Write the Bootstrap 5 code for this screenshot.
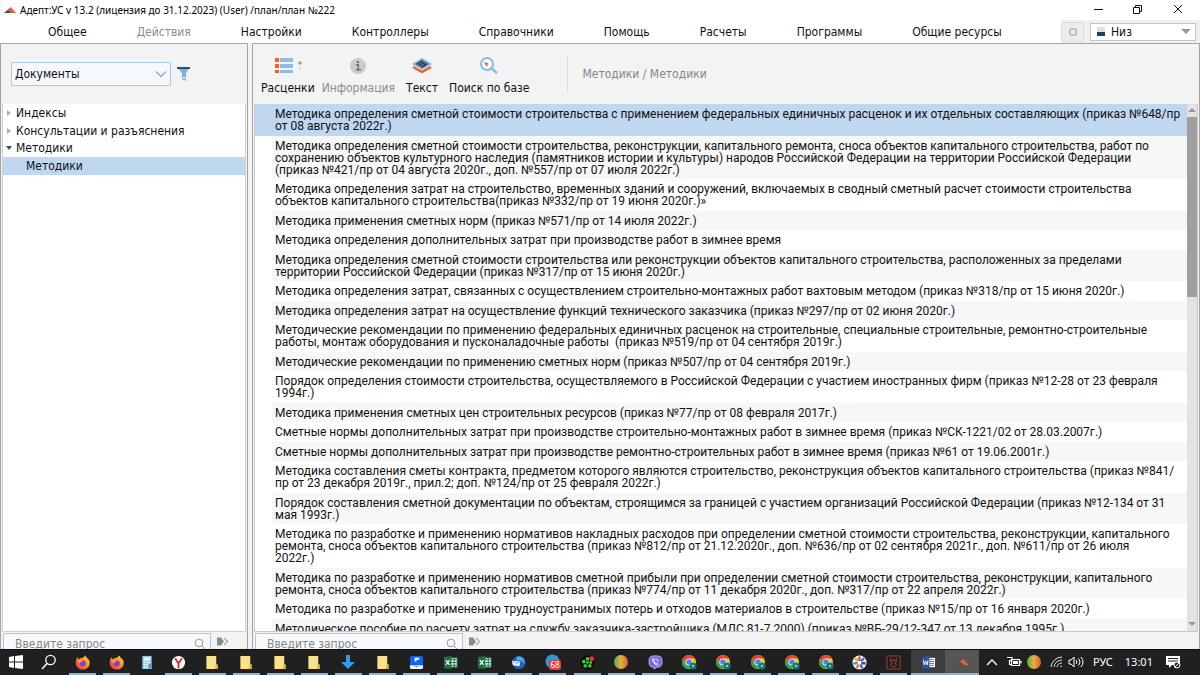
<!DOCTYPE html>
<html lang="ru">
<head>
<meta charset="utf-8">
<meta name="viewport" content="width=device-width, initial-scale=1">
<title>Адепт:УС</title>
<link href="https://cdn.jsdelivr.net/npm/bootstrap@5.3.0/dist/css/bootstrap.min.css" rel="stylesheet">
<style>
body{font:12px/14px "DejaVu Sans Condensed","DejaVu Sans",Verdana,sans-serif;color:#111;background:#f3f3f3}
button{font:inherit;color:inherit;border:0;background:none;padding:0}
svg{display:block;flex:none}
.title-bar{height:20px;font-family:"Noto Sans","Segoe UI",sans-serif;font-size:10px;color:#000}
.win-btns{gap:24px;padding-right:16px}
.menu-bar{height:23px}
.menu-bar ul{padding-left:23px}
.menu-bar a{color:#111;text-decoration:none;padding:0 25px;line-height:24px}
.menu-bar a.off,.tool.off{color:#8c8c8c}
.dock-box{background:#f0f0f0;gap:6px}
.dock-btn{width:23px;height:20px;background:#efedec;border:1px solid #dcdcdc}
.dock-select{width:106px;height:18px;border:1px solid #c6c6c6;background:#fff}
.dock-select select{appearance:none;border:0;background:none;font:inherit;padding:0;color:#111}
.pane{border:1px solid #a3a3a3;border-bottom:0;background:#f3f3f3}
.side{width:248px}
.gutter{width:4px}
.pane-head{height:60px}
.side .pane-head{padding-left:10px}
.doc-select{width:160px;height:24px;min-height:0;border:1px solid #a9c9e9;border-radius:1px;background-color:#f5f9fe;padding:0 20px 0 3px;font-size:12px;line-height:22px;color:#111;background-position:right 3px center;background-size:12px 8px;background-image:url("data:image/svg+xml,%3Csvg xmlns='http://www.w3.org/2000/svg' viewBox='0 0 12 8'%3E%3Cpath d='M1 1.5l5 5 5-5' fill='none' stroke='%2382afd8' stroke-width='1.3'/%3E%3C/svg%3E")}
.tree-box{margin:0 1px;border:1px solid #d0d0d0;border-top:0;background:#fff}
.tree-row{display:flex;align-items:center;width:100%;text-align:left;height:18px;padding-left:3px;gap:4px}
.tree-row:nth-child(2){height:17px}
.tree-row.child{padding-left:23px}
.picked{background:#bfd7ef!important}
.tool{display:flex;flex-direction:column;align-items:center;justify-content:space-between;height:40px;text-align:center}
.tools{gap:7px;padding:11px 0 0 8px}
.crumbs{border-left:1px solid #dedede;height:38px;margin-left:38px;padding-left:14px;color:#858585}
.doc-box{margin:0 1px;border:1px solid #c9c9c9;border-top:0;background:#fff}
.doc-list{font-family:Roboto,Verdana,sans-serif}
.doc-list button{display:block;width:100%;text-align:left;line-height:12px;white-space:pre;padding:4px 0 4px 3px}
.doc-list li{padding-left:17px;overflow:hidden}
.doc-list li:nth-child(even) button{background:#f7f7f7;padding-bottom:3px}
.scroller{width:10px;background:#e3e3e3}
.thumb{height:180px;background:#9f9f9f}
.search-foot{height:17px;overflow:hidden;padding:1px 0 0 2px;gap:6px}
.find-box{width:208px;height:21px;border:1px solid #a9c9e9;background:#f5f9fe}
.find-box input{border:0;background:none;min-width:0;width:180px;font:inherit;padding:0 0 0 11px;height:20px;outline:0}
.find-box input::placeholder{color:#858585;opacity:1}
.task-bar{height:26px;background:#202020;color:#fff;border-top:1px solid #0d0d0d;font-family:"Noto Sans","Segoe UI",sans-serif;font-size:11px}
.start-group{width:65px}
.pin-group{width:130px}
.tb{display:flex;justify-content:center;align-items:center;flex:1 1 0;height:25px;padding-bottom:1px;min-width:0}
.run{background:linear-gradient(#76b9ed,#76b9ed) center bottom/27px 2px no-repeat}
.tb.front{background-color:#3d3d3d;background-size:100% 2px}
.tb.now{background-color:#555;background-size:100% 2px}
.pin-group .slim{flex:0 0 28px}
.tray{width:221px;padding:0 0 2px 7px}
</style>
</head>
<body class="vh-100 overflow-hidden d-flex flex-column">
<svg width="0" height="0" class="position-absolute" aria-hidden="true">
<defs>
<linearGradient id="gMulti"><stop offset="0" stop-color="#4fb052"/><stop offset=".5" stop-color="#e8b23a"/><stop offset="1" stop-color="#e5542f"/></linearGradient>
<linearGradient id="gFox" x1="1" y1="0" x2="0" y2="1"><stop offset="0" stop-color="#ffe03b"/><stop offset=".5" stop-color="#ff8526"/><stop offset="1" stop-color="#f0245f"/></linearGradient>
<symbol id="adept" viewBox="0 0 14 8"><path d="M0 7L6 2l3 5z" fill="#2d5270"/><path d="M4 3l4-3 6 7H9z" fill="#e8602c"/></symbol>
<symbol id="fox" viewBox="0 0 16 16"><path d="M8.500 3L11 .5 12.500 3c3 2 3.500 4 3 7-.8 3.500-4 5.500-7.500 5.500C4 15.500.8 12.500.8 8.500.8 6 1.500 4 2.500 2.500L4 4.500c1.500-1 3-1.500 4.500-1.500z" fill="url(#gFox)"/><circle cx="8.300" cy="9" r="3.200" fill="#7b3fe0"/><path d="M3 6c2-1 4-.5 5.500 1-2 0-2.500 1.500-4 1.500z" fill="#ffa436"/></symbol>
<symbol id="calc" viewBox="0 0 12 16"><path d="M1 1h10v14H1z" fill="#8cc6ec"/><path d="M2.500 2.500h7V6h-7z" fill="#eef8ff"/><path d="M2.500 8h7M2.500 10.500h5M2.500 13h5" stroke="#fff" stroke-width="1.600" stroke-dasharray="1.600 .8"/><path d="M8 9.500h2v4.500H8z" fill="#3f91cd"/></symbol>
<symbol id="yan" viewBox="0 0 16 16"><circle cx="8" cy="8" r="7" fill="#fff"/><path d="M4.300 3.500L8 9v5M11.700 3.500L8 9" fill="none" stroke="#e2252b" stroke-width="2"/></symbol>
<symbol id="fold" viewBox="0 0 14 16"><path d="M1 1h10.500v9H13v5H1z" fill="#fbe28a"/><path d="M11 10h2v5h-3z" fill="#d9af45"/></symbol>
<symbol id="down" viewBox="0 0 14 16"><path d="M5 1h4v7h5l-7 7-7-7h5z" fill="#3498e8"/></symbol>
<symbol id="blue" viewBox="0 0 16 16"><path d="M1 3q0-2 2-2h10q2 0 2 2v8H1z" fill="#0867f8"/><path d="M1 11h14v2q0 2-2 2H3q-2 0-2-2z" fill="#f7f9ff"/><path d="M6 9V3h5v2H8v2H6" fill="#fff"/><path d="M7 12l1 1 1-1" stroke="#333" fill="none"/></symbol>
<symbol id="excel" viewBox="0 0 16 16"><path d="M8 3h7v10H8z" fill="#e9f4ed" stroke="#217346"/><path d="M9 5h5M9 8h5M9 11h5M12 3v10" stroke="#217346"/><path d="M1 2l8-1v14l-8-1z" fill="#1c7042"/><path d="M3 5.500l4 5M7 5.500l-4 5" stroke="#fff" stroke-width="1.300"/></symbol>
<symbol id="bird" viewBox="0 0 16 16"><circle cx="8.500" cy="8" r="7" fill="#1e63b8"/><path d="M6 2c5-2 10 3 8 8-1-4-4-5-8-4z" fill="#4eadf0"/><path d="M1 6l9 1-1 5-7-1z" fill="#f0f3f7"/><path d="M2 6.500L6 9l4-2" stroke="#8296ad" fill="none"/></symbol>
<symbol id="tele" viewBox="0 0 16 16"><circle cx="7.500" cy="7.500" r="7" fill="#2a9bd7"/><rect x="4" y="6" width="12" height="10" rx="2" fill="#e33b3b"/></symbol>
<symbol id="icq" viewBox="0 0 16 16"><circle cx="8" cy="8" r="7.500" fill="#050805"/><g fill="#2ed22e"><circle cx="8" cy="4" r="2"/><circle cx="4" cy="7" r="2"/><circle cx="5.500" cy="11.500" r="2"/><circle cx="10.500" cy="11.500" r="2"/><circle cx="11.500" cy="8" r="1.500"/><circle cx="8" cy="8" r="1.500"/></g><circle cx="12.500" cy="4" r="2.600" fill="#f32d2d"/></symbol>
<symbol id="ball" viewBox="0 0 16 16"><circle cx="8" cy="8" r="7" fill="url(#gMulti)"/></symbol>
<symbol id="viber" viewBox="0 0 16 16"><path d="M3 1.500Q8 0 13 1.500q2 1 2 5.500t-2 5.500l-4 .8L6.500 15v-2L3 12.500Q1 11 1 7t2-5.500z" fill="#7567ed" stroke="#d7d2fb" stroke-width=".8"/><path d="M5 4q-1 1 1 4t4 3l1-1-2-1.500-1 .5-1.500-2L7 5.500 6 4zM8 4q3 0 3 3" fill="none" stroke="#fff"/></symbol>
<symbol id="chrome" viewBox="0 0 16 16"><circle cx="8" cy="8" r="7" fill="#fbc116"/><path d="M1.900 4.500A7 7 0 0 1 14 4.500H8L5 9.500z" fill="#e94235"/><path d="M1.900 4.500A7 7 0 0 0 7.500 15l3-5.200-5.500 0z" fill="#32a350"/><circle cx="8" cy="8" r="3.600" fill="#fff"/><circle cx="8" cy="8" r="2.800" fill="#4285f4"/><circle cx="12" cy="12" r="3.600" fill="#087d72"/><circle cx="12" cy="12" r="1" fill="#c6e5df"/></symbol>
<symbol id="wheel" viewBox="0 0 16 16"><circle cx="8" cy="8" r="7.500" fill="#fff"/><g stroke-width="2.600"><path d="M8 6.500V1.500" stroke="#e84b42"/><path d="M9.500 6.500l3.500-3" stroke="#2a77c9"/><path d="M10 8.500l4.500 .5" stroke="#2d4d9c"/><path d="M9 10l2 4" stroke="#7651a8"/><path d="M7 10l-2 4" stroke="#ed7b32"/><path d="M6 8.500L1.500 9" stroke="#27a8a2"/><path d="M6.500 6.500L3 3.500" stroke="#f1a632"/></g></symbol>
<symbol id="beast" viewBox="0 0 16 16"><path d="M1 1h14v14H1z" fill="#241c1c" stroke="#8c4640"/><path d="M5 3v3h6V3M4 6l2 2-1 3 3 2 3-2-1-3 2-2M6.500 8.500v1M9.500 8.500v1M8 4v2" fill="none" stroke="#ad5147" stroke-width=".8"/></symbol>
<symbol id="word" viewBox="0 0 16 16"><path d="M8 3h7v10H8z" fill="#fff"/><path d="M9 5h5M9 7h5M9 9h5M9 11h5" stroke="#2b579a" stroke-width=".8"/><path d="M1 2l8-1v14l-8-1z" fill="#2b579a"/><path d="M2.500 5.500l1 5 1.500-4 1.500 4 1-5" stroke="#fff" fill="none"/></symbol>
<symbol id="lens" viewBox="0 0 16 16"><circle cx="9.500" cy="6" r="4.700" fill="none" stroke="currentColor" stroke-width="1.300"/><path d="M6 9.500L1 15" stroke="currentColor" stroke-width="1.500"/></symbol>
<symbol id="find" viewBox="0 0 12 12"><circle cx="5" cy="5" r="3.800" fill="none" stroke="#999"/><path d="M8 8l3 3" stroke="#999"/></symbol>
<symbol id="go" viewBox="0 0 12 8"><path d="M0 0h4l3 4-3 4H0z" fill="#8a8a8a"/><path d="M7 .5L10.500 4 7 7.500" fill="none" stroke="#aaa" stroke-width="1.300"/></symbol>
</defs>
</svg>

<header class="bg-white">
<div class="title-bar d-flex align-items-center">
<svg class="ms-1 me-1" width="12" height="7"><use href="#adept"/></svg><span>Адепт:УС v 13.2 (лицензия до 31.12.2023) (User) /план/план №222</span>
<div class="win-btns d-flex ms-auto">
<button aria-label="Свернуть"><svg width="16" height="12"><path d="M2 5.500h9" stroke="#111"/></svg></button>
<button aria-label="Восстановить"><svg width="16" height="12"><path d="M1.500 3.500h6v6h-6zM3.500 3V1.500h6v6H8" fill="none" stroke="#111"/></svg></button>
<button aria-label="Закрыть"><svg width="12" height="12"><path d="M2 1l8 8M10 1l-8 8" stroke="#111"/></svg></button>
</div>
</div>
<nav class="menu-bar d-flex">
<ul class="list-unstyled d-flex mb-0 text-nowrap">
<li><a href="#">Общее</a></li><li><a href="#" class="off">Действия</a></li><li><a href="#">Настройки</a></li><li><a href="#">Контроллеры</a></li><li><a href="#">Справочники</a></li><li><a href="#">Помощь</a></li><li><a href="#">Расчеты</a></li><li><a href="#">Программы</a></li><li><a href="#">Общие ресурсы</a></li>
</ul>
<div class="dock-box d-flex align-items-center ms-auto pe-1">
<button class="dock-btn d-flex align-items-center justify-content-center" aria-label="Панель"><svg width="8" height="8"><path d="M1 1h6v6H1z" fill="none" stroke="#999"/></svg></button>
<label class="dock-select d-flex align-items-center px-1"><svg width="12" height="12"><path d="M2 1h8v5H2z" fill="#d6e3ef"/><path d="M2 6h8v4H2z" fill="#233f5e"/></svg>
<select class="flex-fill ms-1" aria-label="Положение"><option>Низ</option></select><svg width="10" height="6"><path d="M0 0h10L5 5z" fill="#999"/></svg></label>
</div>
</nav>
</header>

<main class="d-flex flex-fill overflow-hidden">
<aside class="pane side d-flex flex-column flex-shrink-0">
<div class="pane-head d-flex align-items-center"><select class="form-select doc-select" aria-label="Раздел"><option>Документы</option></select>
<button class="ms-1" aria-label="Фильтр"><svg width="18" height="16"><path d="M2 1h13l-4 6v3H7V7z" fill="#7fb0dd"/><path d="M2 1h13v2H2z" fill="#29506f"/><path d="M7.500 10.500h3v3h-3zM10.500 12v3" fill="#e5f1fb" stroke="#7fb0dd"/></svg></button></div>
<div class="tree-box flex-fill">
<button class="tree-row"><svg width="6" height="6"><path d="M1 0l4 3-4 3z" fill="#aaa"/></svg>Индексы</button>
<button class="tree-row"><svg width="6" height="6"><path d="M1 0l4 3-4 3z" fill="#aaa"/></svg>Консультации и разъяснения</button>
<button class="tree-row"><svg width="6" height="6"><path d="M0 1h6L3 5z" fill="#29506f"/></svg>Методики</button>
<button class="tree-row child picked">Методики</button>
</div>
<form class="search-foot d-flex"><div class="find-box d-flex"><input type="text" placeholder="Введите запрос" aria-label="Введите запрос"><svg class="ms-auto me-1 mt-1" width="12" height="12"><use href="#find"/></svg></div><button type="button" aria-label="Найти" class="align-self-start mt-1"><svg width="12" height="9"><use href="#go"/></svg></button></form>
</aside>
<div class="gutter flex-shrink-0"></div>
<section class="pane d-flex flex-column flex-fill overflow-hidden">
<div class="pane-head d-flex flex-shrink-0 text-nowrap">
<div class="tools d-flex">
<button class="tool"><svg width="30" height="20"><path d="M2 3h4v4H2zM2 9h4v4H2zM2 15h4v3H2z" fill="#f95d17"/><path d="M7 3h13v4H7zM7 9h13v4H7zM7 15h13v3H7z" fill="#90bce2"/><circle cx="27" cy="8" r="1.700" fill="#69c65a"/><circle cx="27" cy="13" r="1.500" fill="#ddd"/></svg>Расценки</button>
<button class="tool off"><svg width="18" height="20"><circle cx="9" cy="11" r="8" fill="#cbcbcb"/><path d="M8 6h2v2H8zM7 9h3v5h2v1.500H7V14h1.500v-3.500H7z" fill="#6e6e6e"/></svg>Информация</button>
<button class="tool mx-1"><svg width="20" height="20"><path d="M1 12l9 5 9-5" fill="none" stroke="#f45b1c" stroke-width="2.400"/><path d="M0 9l10-6 10 6-10 6z" fill="#86b6df"/><path d="M3.500 9L10 5l6.500 4-6.500 4z" fill="#203f5c"/><path d="M7 7.500l5 3M9.500 6l5 3M5 9l5 3" stroke="#86a4be" stroke-width=".7"/></svg>Текст</button>
<button class="tool"><svg width="20" height="20"><circle cx="8" cy="9" r="6" fill="#f7fbff" stroke="#8abbe5" stroke-width="2"/><path d="M12 13l6 5" stroke="#8abbe5" stroke-width="2.400"/><path d="M5 7l4 1-1 4z" fill="#f45b1c"/></svg>Поиск по базе</button>
</div>
<div class="crumbs d-flex align-items-center align-self-center">Методики / Методики</div>
</div>
<div class="doc-box d-flex flex-fill overflow-hidden">
<ul class="doc-list list-unstyled mb-0 flex-fill overflow-hidden">
<li class="picked"><button>Методика определения сметной стоимости строительства с применением федеральных единичных расценок и их отдельных составляющих (приказ №648/пр<br>от 08 августа 2022г.)</button></li>
<li><button>Методика определения сметной стоимости строительства, реконструкции, капитального ремонта, сноса объектов капитального строительства, работ по<br>сохранению объектов культурного наследия (памятников истории и культуры) народов Российской Федерации на территории Российской Федерации<br>(приказ №421/пр от 04 августа 2020г., доп. №557/пр от 07 июля 2022г.)</button></li>
<li><button>Методика определения затрат на строительство, временных зданий и сооружений, включаемых в сводный сметный расчет стоимости строительства<br>объектов капитального строительства(приказ №332/пр от 19 июня 2020г.)»</button></li>
<li><button>Методика применения сметных норм (приказ №571/пр от 14 июля 2022г.)</button></li>
<li><button>Методика определения дополнительных затрат при производстве работ в зимнее время</button></li>
<li><button>Методика определения сметной стоимости строительства или реконструкции объектов капитального строительства, расположенных за пределами<br>территории Российской Федерации (приказ №317/пр от 15 июня 2020г.)</button></li>
<li><button>Методика определения затрат, связанных с осуществлением строительно-монтажных работ вахтовым методом (приказ №318/пр от 15 июня 2020г.)</button></li>
<li><button>Методика определения затрат на осуществление функций технического заказчика (приказ №297/пр от 02 июня 2020г.)</button></li>
<li><button>Методические рекомендации по применению федеральных единичных расценок на строительные, специальные строительные, ремонтно-строительные<br>работы, монтаж оборудования и пусконаладочные работы  (приказ №519/пр от 04 сентября 2019г.)</button></li>
<li><button>Методические рекомендации по применению сметных норм (приказ №507/пр от 04 сентября 2019г.)</button></li>
<li><button>Порядок определения стоимости строительства, осуществляемого в Российской Федерации с участием иностранных фирм (приказ №12-28 от 23 февраля<br>1994г.)</button></li>
<li><button>Методика применения сметных цен строительных ресурсов (приказ №77/пр от 08 февраля 2017г.)</button></li>
<li><button>Сметные нормы дополнительных затрат при производстве строительно-монтажных работ в зимнее время (приказ №СК-1221/02 от 28.03.2007г.)</button></li>
<li><button>Сметные нормы дополнительных затрат при производстве ремонтно-строительных работ в зимнее время (приказ №61 от 19.06.2001г.)</button></li>
<li><button>Методика составления сметы контракта, предметом которого являются строительство, реконструкция объектов капитального строительства (приказ №841/<br>пр от 23 декабря 2019г., прил.2; доп. №124/пр от 25 февраля 2022г.)</button></li>
<li><button>Порядок составления сметной документации по объектам, строящимся за границей с участием организаций Российской Федерации (приказ №12-134 от 31<br>мая 1993г.)</button></li>
<li><button>Методика по разработке и применению нормативов накладных расходов при определении сметной стоимости строительства, реконструкции, капитального<br>ремонта, сноса объектов капитального строительства (приказ №812/пр от 21.12.2020г., доп. №636/пр от 02 сентября 2021г., доп. №611/пр от 26 июля<br>2022г.)</button></li>
<li><button>Методика по разработке и применению нормативов сметной прибыли при определении сметной стоимости строительства, реконструкции, капитального<br>ремонта, сноса объектов капитального строительства (приказ №774/пр от 11 декабря 2020г., доп. №317/пр от 22 апреля 2022г.)</button></li>
<li><button>Методика по разработке и применению трудноустранимых потерь и отходов материалов в строительстве (приказ №15/пр от 16 января 2020г.)</button></li>
<li><button>Методическое пособие по расчету затрат на службу заказчика-застройщика (МДС 81-7.2000) (приказ №ВБ-29/12-347 от 13 декабря 1995г.)</button></li>
</ul>
<div class="scroller d-flex flex-column flex-shrink-0"><svg width="10" height="13"><path d="M1 8h8L5 4z" fill="#999"/></svg><div class="thumb"></div><svg class="mt-auto" width="10" height="13"><path d="M1 4h8L5 8z" fill="#999"/></svg></div>
</div>
<form class="search-foot d-flex flex-shrink-0"><div class="find-box d-flex"><input type="text" placeholder="Введите запрос" aria-label="Введите запрос"><svg class="ms-auto me-1 mt-1" width="12" height="12"><use href="#find"/></svg></div><button type="button" aria-label="Найти" class="align-self-start mt-1"><svg width="12" height="9"><use href="#go"/></svg></button></form>
</section>
</main>

<footer class="task-bar d-flex flex-shrink-0">
<div class="start-group d-flex"><button class="tb" aria-label="Пуск"><svg width="16" height="16"><path d="M1 3l5-1v5.500H1zM7 2l8-1v6.500H7zM1 8.500h5V14l-5-1zM7 8.500h8V15l-8-1z" fill="#fff"/></svg></button><button class="tb" aria-label="Поиск"><svg width="16" height="16"><use href="#lens"/></svg></button></div>
<div class="pin-group d-flex"><button class="tb run" aria-label="Firefox"><svg width="15" height="15"><use href="#fox"/></svg></button><button class="tb run" aria-label="Firefox 2"><svg width="15" height="15"><use href="#fox"/></svg></button><button class="tb slim" aria-label="Калькулятор"><svg width="12" height="15"><use href="#calc"/></svg></button><button class="tb run" aria-label="Яндекс"><svg width="15" height="15"><use href="#yan"/></svg></button></div>
<div class="d-flex flex-fill">
<button class="tb run" aria-label="Папка 1"><svg width="14" height="15"><use href="#fold"/></svg></button><button class="tb run" aria-label="Папка 2"><svg width="14" height="15"><use href="#fold"/></svg></button><button class="tb run" aria-label="Папка 3"><svg width="14" height="15"><use href="#fold"/></svg></button><button class="tb run" aria-label="Папка 4"><svg width="14" height="15"><use href="#fold"/></svg></button>
<button class="tb run" aria-label="Загрузки"><svg width="14" height="16"><use href="#down"/></svg></button><button class="tb run" aria-label="Папка 5"><svg width="14" height="15"><use href="#fold"/></svg></button><button class="tb run" aria-label="Хранилище"><svg width="15" height="15"><use href="#blue"/></svg></button><button class="tb run" aria-label="Excel 1"><svg width="15" height="15"><use href="#excel"/></svg></button><button class="tb run" aria-label="Excel 2"><svg width="15" height="15"><use href="#excel"/></svg></button>
<button class="tb run" aria-label="Почта"><svg width="15" height="15"><use href="#bird"/></svg></button><button class="tb run" aria-label="Telegram"><svg width="16" height="16"><use href="#tele"/><text x="10" y="14" font-size="8" fill="#fff" text-anchor="middle">68</text></svg></button><button class="tb run" aria-label="ICQ"><svg width="15" height="15"><use href="#icq"/></svg></button><button class="tb run" aria-label="Шар"><svg width="16" height="16"><use href="#ball"/></svg></button><button class="tb run" aria-label="Viber"><svg width="15" height="15"><use href="#viber"/></svg></button>
<button class="tb run" aria-label="Chrome 1"><svg width="16" height="16"><use href="#chrome"/></svg></button><button class="tb run" aria-label="Chrome 2"><svg width="16" height="16"><use href="#chrome"/></svg></button><button class="tb run" aria-label="Chrome 3"><svg width="16" height="16"><use href="#chrome"/></svg></button><button class="tb run" aria-label="Chrome 4"><svg width="16" height="16"><use href="#chrome"/></svg></button><button class="tb run" aria-label="Chrome 5"><svg width="16" height="16"><use href="#chrome"/></svg></button>
<button class="tb run" aria-label="Фото"><svg width="15" height="15"><use href="#wheel"/></svg></button><button class="tb run" aria-label="Приложение"><svg width="15" height="15"><use href="#beast"/></svg></button><button class="tb run front" aria-label="Word"><svg width="15" height="15"><use href="#word"/></svg></button><button class="tb run now" aria-label="Адепт"><svg width="13" height="7"><use href="#adept"/></svg></button>
</div>
<div class="tray d-flex align-items-center">
<svg width="12" height="10"><path d="M1 8l5-5 5 5" fill="none" stroke="#fff" stroke-width="1.300"/></svg>
<svg class="ms-2" width="16" height="12"><path d="M5.500 3.500h8v6h-8zM14 5.500h1v2M1 1.500h5v3H3.500v4H6" fill="none" stroke="#fff" stroke-width="1.200"/><path d="M7 5h5v3H7z" fill="#fff"/></svg>
<svg class="ms-1" width="16" height="16"><use href="#ball"/></svg>
<svg class="ms-2" width="14" height="14"><g fill="none" stroke="#ddd"><path d="M1 12A11 11 0 0 1 12 2M4 12a8 8 0 0 1 8-7M7 12a5 5 0 0 1 5-4M10 12a2 2 0 0 1 2-1"/></g></svg>
<svg class="ms-1" width="17" height="14"><path d="M1 5h2l3-3v10L3 9H1z" fill="none" stroke="#fff"/><path d="M8 5q2 2 0 4M10.500 3.500q3 3.500 0 7M13 2q4 5 0 10" fill="none" stroke="#fff"/></svg>
<button class="ms-2">РУС</button><time class="ms-2 ps-1">13:01</time>
<button class="ms-2 ps-1" aria-label="Уведомления"><svg width="16" height="16"><path d="M1 2h14v9H7l-3 3v-3H1z" fill="#fff"/><path d="M3 4.500h10M3 7h10" stroke="#222"/><circle cx="12" cy="11" r="3" fill="#222" stroke="#fff"/><path d="M10 13l4-4" stroke="#fff"/></svg></button>
</div>
</footer>
<script src="https://cdn.jsdelivr.net/npm/bootstrap@5.3.0/dist/js/bootstrap.bundle.min.js"></script>
</body>
</html>
